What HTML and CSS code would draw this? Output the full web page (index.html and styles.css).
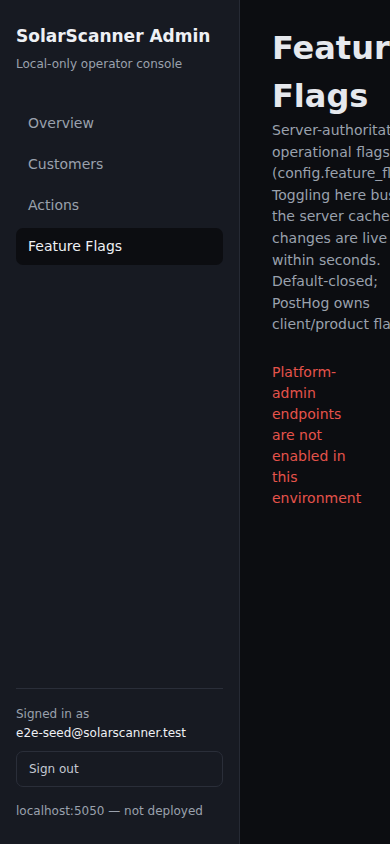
FILE: index.html
```html
<!DOCTYPE html>
<html lang="en">
<head>
<meta charset="utf-8">
<title>SolarScanner Admin — Feature Flags</title>
<link rel="stylesheet" href="styles.css">
</head>
<body>
<div class="app">
  <aside class="sidebar">
    <div class="brand">
      <div class="brand-title">SolarScanner Admin</div>
      <div class="brand-sub">Local-only operator console</div>
    </div>
    <nav class="nav">
      <a class="nav-item" href="#">Overview</a>
      <a class="nav-item" href="#">Customers</a>
      <a class="nav-item" href="#">Actions</a>
      <a class="nav-item active" href="#">Feature Flags</a>
    </nav>
    <div class="account">
      <div class="signed-label">Signed in as</div>
      <div class="signed-email">e2e-seed@solarscanner.test</div>
      <button class="signout" type="button">Sign out</button>
      <div class="env">localhost:5050 — not deployed</div>
    </div>
  </aside>
  <main class="main">
    <header class="page-header">
      <h1 class="page-title">Feature Flags</h1>
      <p class="page-desc">Server-authoritative operational flags (config.feature_flags). Toggling here busts the server cache; changes are live within seconds. Default-closed; PostHog owns client/product flags.</p>
    </header>
    <div class="error">Platform-admin endpoints are not enabled in this environment</div>
  </main>
</div>
</body>
</html>
```
FILE: styles.css
```css
* { box-sizing: border-box; }
html, body {
  margin: 0;
  padding: 0;
  height: 100%;
  overflow: hidden;
  background: #0c0d11;
  font-family: "DejaVu Sans", "Noto Sans", sans-serif;
}
.app {
  display: flex;
  height: 844px;
  width: 390px;
}
.sidebar {
  flex: 0 0 240px;
  width: 240px;
  background: #171a22;
  border-right: 1px solid #262a34;
  display: flex;
  flex-direction: column;
  padding: 24px 16px 24px;
}
.brand-title {
  font-size: 17px;
  font-weight: bold;
  line-height: 24px;
  color: #eef0f4;
}
.brand-sub {
  margin-top: 7px;
  font-size: 12px;
  line-height: 18px;
  color: #9aa1ad;
}
.nav {
  margin-top: 32px;
  display: flex;
  flex-direction: column;
  gap: 4px;
}
.nav-item {
  display: block;
  padding: 8px 12px;
  font-size: 14px;
  line-height: 21px;
  color: #9aa1ad;
  text-decoration: none;
  border-radius: 7px;
}
.nav-item.active {
  background: #0c0d11;
  color: #eef0f4;
}
.account {
  margin-top: auto;
  border-top: 1px solid #2a2e39;
  padding-top: 16px;
}
.signed-label {
  font-size: 12px;
  line-height: 19px;
  color: #9aa1ad;
}
.signed-email {
  font-size: 12px;
  line-height: 19px;
  color: #eef0f4;
}
.signout {
  display: block;
  width: 100%;
  margin-top: 8px;
  padding: 8px 12px;
  text-align: left;
  font-family: inherit;
  font-size: 12px;
  line-height: 18px;
  color: #c4c9d2;
  background: transparent;
  border: 1px solid #2a2e39;
  border-radius: 7px;
}
.env {
  margin-top: 15px;
  font-size: 12px;
  line-height: 18px;
  color: #9aa1ad;
}
.main {
  flex: 1 1 auto;
  min-width: 0;
  padding: 24px 32px;
  overflow: hidden;
}
.page-header {
  width: 150px;
}
.page-title {
  margin: 0;
  font-size: 32px;
  line-height: 48px;
  font-weight: bold;
  color: #e6e8ed;
}
.page-desc {
  margin: 0;
  font-size: 14px;
  line-height: 21.6px;
  color: #9aa1ad;
}
.error {
  margin-top: 26px;
  width: 92px;
  font-size: 14px;
  line-height: 21px;
  color: #e5534b;
}
```
